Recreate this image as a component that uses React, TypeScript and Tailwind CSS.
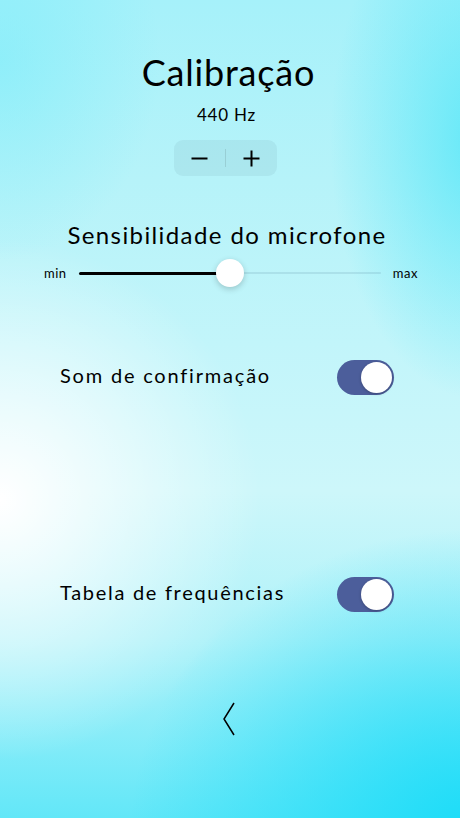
import React from "react";

function Toggle() {
  return (
    <div className="w-[57px] h-[35px] rounded-full bg-[#4c5e9b] flex items-center justify-end px-[2px] shrink-0">
      <div className="w-[31px] h-[31px] rounded-full bg-white shadow-[0_1px_3px_rgba(0,0,0,0.25)]" />
    </div>
  );
}

export default function App() {
  return (
    <div className="relative w-full h-[818px] overflow-hidden font-['Lato',sans-serif] text-black bg-[radial-gradient(ellipse_260px_260px_at_0px_500px,rgba(255,255,255,1),rgba(255,255,255,0)),radial-gradient(ellipse_340px_300px_at_470px_830px,rgba(28,220,248,1),rgba(28,220,248,0)),radial-gradient(ellipse_150px_260px_at_480px_140px,rgba(80,230,248,0.8),rgba(80,230,248,0)),radial-gradient(ellipse_160px_200px_at_0px_60px,rgba(120,236,250,0.55),rgba(120,236,250,0)),linear-gradient(180deg,#a6f1fa_0%,#b6f3f9_22%,#c2f5fa_42%,#cdf7fa_60%,#b0f2f9_78%,#62e7f8_100%)]">
      <div className="flex flex-col items-center">
        <h1 className="mt-[50px] ml-[-3px] text-[36px] leading-[44px] font-normal tracking-[0.8px]">Calibração</h1>
        <div className="mt-[11px] text-[17px] leading-[20px] tracking-[0.8px] ml-[-7px]">440 Hz</div>
        <div className="mt-[15px] ml-[-9px] w-[103px] h-[36px] rounded-[9px] bg-[rgba(90,130,145,0.1)] flex items-center">
          <button className="flex-1 h-full flex items-center justify-center">
            <svg width="17" height="17" viewBox="0 0 17 17">
              <line x1="0.5" y1="8.5" x2="16.5" y2="8.5" stroke="black" strokeWidth="2" />
            </svg>
          </button>
          <div className="w-px h-[18px] bg-[rgba(0,0,0,0.1)]" />
          <button className="flex-1 h-full flex items-center justify-center">
            <svg width="17" height="17" viewBox="0 0 17 17">
              <line x1="0.5" y1="8.5" x2="16.5" y2="8.5" stroke="black" strokeWidth="2" />
              <line x1="8.5" y1="0.5" x2="8.5" y2="16.5" stroke="black" strokeWidth="2" />
            </svg>
          </button>
        </div>
        <h2 className="mt-[44px] ml-[-6px] text-[24px] leading-[30px] font-normal tracking-[1.4px]">Sensibilidade do microfone</h2>
        <div className="mt-[9px] w-full h-[28px] flex items-center pl-[44px] pr-[42px]">
          <span className="text-[13px] leading-none tracking-[0.5px]">min</span>
          <div className="relative flex-1 mx-[12px] h-[28px] flex items-center">
            <div className="h-[3px] w-[151px] bg-black rounded-l-full" />
            <div className="h-[2px] flex-1 bg-[rgba(90,140,160,0.18)] rounded-r-full" />
            <div className="absolute left-[137px] top-0 w-[28px] h-[28px] rounded-full bg-white shadow-[0_2px_6px_rgba(0,0,0,0.2)]" />
          </div>
          <span className="text-[13px] leading-none tracking-[0.5px]">max</span>
        </div>
        <div className="mt-[73px] w-full pl-[60px] pr-[66px] flex items-center justify-between">
          <span className="pb-[5px] text-[20px] leading-[24px] tracking-[1.8px]">Som de confirmação</span>
          <Toggle />
        </div>
        <div className="mt-[182px] w-full pl-[60px] pr-[66px] flex items-center justify-between">
          <span className="pb-[5px] text-[20px] leading-[24px] tracking-[1.7px]">Tabela de frequências</span>
          <Toggle />
        </div>
        <div className="mt-[90px] ml-[-2px]">
          <svg width="14" height="34" viewBox="0 0 14 34">
            <polyline points="12,1 2,17 12,33" fill="none" stroke="black" strokeWidth="1.5" strokeLinejoin="miter" />
          </svg>
        </div>
      </div>
    </div>
  );
}
